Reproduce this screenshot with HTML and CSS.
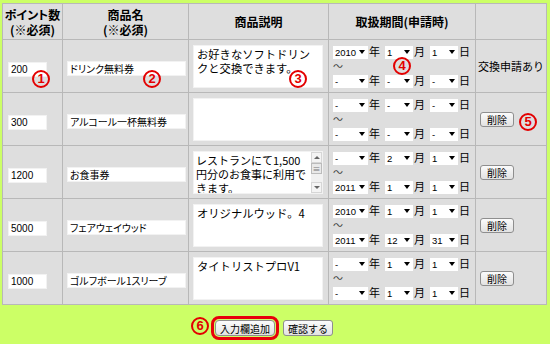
FILE: index.html
```html
<!DOCTYPE html>
<html lang="ja">
<head>
  <meta charset="UTF-8" />
  <title>交換商品設定</title>
  <link rel="stylesheet" href="styles.css">
</head>
<body>
  <div class="sheet">
    <table class="grid">
      <colgroup>
        <col class="col-pt"><col class="col-name"><col class="col-desc"><col class="col-date"><col class="col-act">
      </colgroup>
      <thead>
        <tr>
          <th>ポイント数<br>(※必須)</th>
          <th>商品名<br>(※必須)</th>
          <th>商品説明</th>
          <th>取扱期間(申請時)</th>
          <th></th>
        </tr>
      </thead>
      <tbody>
        <tr>
          <td><input class="pt" value="200"></td>
          <td><input class="name" value="ドリンク無料券"></td>
          <td><div class="descbox"><textarea class="desc">お好きなソフトドリンクと交換できます。</textarea></div></td>
          <td class="date">
            <div class="dline"><span class="sel y"><select><option>2010</option></select></span>年<span class="sel"><select><option>1</option></select></span>月<span class="sel"><select><option>1</option></select></span>日</div>
            <div class="tilde">〜</div>
            <div class="dline"><span class="sel y"><select><option>-</option></select></span>年<span class="sel"><select><option>-</option></select></span>月<span class="sel"><select><option>-</option></select></span>日</div>
          </td>
          <td class="act">交換申請あり</td>
        </tr>
        <tr>
          <td><input class="pt" value="300"></td>
          <td><input class="name" value="アルコール一杯無料券"></td>
          <td><div class="descbox"><textarea class="desc"></textarea></div></td>
          <td class="date">
            <div class="dline"><span class="sel y"><select><option>-</option></select></span>年<span class="sel"><select><option>-</option></select></span>月<span class="sel"><select><option>-</option></select></span>日</div>
            <div class="tilde">〜</div>
            <div class="dline"><span class="sel y"><select><option>-</option></select></span>年<span class="sel"><select><option>-</option></select></span>月<span class="sel"><select><option>-</option></select></span>日</div>
          </td>
          <td class="act"><button class="btn">削除</button></td>
        </tr>
        <tr>
          <td><input class="pt" value="1200"></td>
          <td><input class="name" value="お食事券"></td>
          <td>
            <div class="descbox">
              <textarea class="desc scroll">レストランにて1,500
円分のお食事に利用できます。</textarea>
              <span class="vscroll"><i class="arr up"></i><i class="thumb">≡</i><i class="track"></i><i class="arr down"></i></span>
            </div>
          </td>
          <td class="date">
            <div class="dline"><span class="sel y"><select><option>-</option></select></span>年<span class="sel"><select><option>2</option></select></span>月<span class="sel"><select><option>1</option></select></span>日</div>
            <div class="tilde">〜</div>
            <div class="dline"><span class="sel y"><select><option>2011</option></select></span>年<span class="sel"><select><option>1</option></select></span>月<span class="sel"><select><option>1</option></select></span>日</div>
          </td>
          <td class="act"><button class="btn">削除</button></td>
        </tr>
        <tr>
          <td><input class="pt" value="5000"></td>
          <td><input class="name" value="フェアウェイウッド"></td>
          <td><div class="descbox"><textarea class="desc">オリジナルウッド。4</textarea></div></td>
          <td class="date">
            <div class="dline"><span class="sel y"><select><option>2010</option></select></span>年<span class="sel"><select><option>1</option></select></span>月<span class="sel"><select><option>1</option></select></span>日</div>
            <div class="tilde">〜</div>
            <div class="dline"><span class="sel y"><select><option>2011</option></select></span>年<span class="sel"><select><option>12</option></select></span>月<span class="sel"><select><option>31</option></select></span>日</div>
          </td>
          <td class="act"><button class="btn">削除</button></td>
        </tr>
        <tr>
          <td><input class="pt" value="1000"></td>
          <td><input class="name" value="ゴルフボール1スリーブ"></td>
          <td><div class="descbox"><textarea class="desc">タイトリストプロV1</textarea></div></td>
          <td class="date">
            <div class="dline"><span class="sel y"><select><option>-</option></select></span>年<span class="sel"><select><option>1</option></select></span>月<span class="sel"><select><option>1</option></select></span>日</div>
            <div class="tilde">〜</div>
            <div class="dline"><span class="sel y"><select><option>-</option></select></span>年<span class="sel"><select><option>1</option></select></span>月<span class="sel"><select><option>1</option></select></span>日</div>
          </td>
          <td class="act"><button class="btn">削除</button></td>
        </tr>
      </tbody>
    </table>
    <div class="actions">
      <button class="btn big marked">入力欄追加</button>
      <button class="btn big">確認する</button>
    </div>

    <!-- annotation marks -->
    <span class="mark m1">1</span>
    <span class="mark m2">2</span>
    <span class="mark m3">3</span>
    <span class="mark m4">4</span>
    <span class="mark m5">5</span>
    <span class="mark m6">6</span>
  </div>
</body>
</html>
```

FILE: styles.css
```css
* { box-sizing: border-box; }
body {
  margin: 0;
  background: #ccff66;
  font-family: "Noto Sans CJK JP", sans-serif;
  color: #000;
}
.sheet {
  position: relative;
  width: 550px; height: 344px;
  padding: 3px 4px 0 2px;
  background: #ccff66;
}
.grid {
  width: 544px;
  border-collapse: collapse;
  table-layout: fixed;
  background: #dedede;
}
.col-pt { width: 60px; }
.col-name { width: 126px; }
.col-desc { width: 140px; }
.col-date { width: 147px; }
.col-act { width: 71px; }
.grid th, .grid td {
  border: 1px solid #b8b8b8;
  padding: 0 4px;
}
.grid th {
  height: 36px;
  padding: 0;
  font-size: 12px;
  line-height: 15px;
  font-weight: bold;
  text-align: center;
  white-space: nowrap;
  font-feature-settings: "palt";
}
.grid td { height: 53px; }

input, textarea, select {
  font-family: inherit;
  color: #000;
  background: #fff;
  border: 1px solid #f2f2f2;
  outline: none;
  margin: 0;
}
.pt {
  width: 39px; height: 15px;
  padding: 0 2px;
  font-size: 10px;
  font-family: "Liberation Sans", sans-serif;
  margin-left: 1px;
}
.name {
  width: 119px; height: 15px;
  padding: 0 2px;
  font-size: 10px;
  font-feature-settings: "palt";
}
.descbox {
  position: relative;
  width: 130px; height: 43px;
}
.desc {
  display: block;
  width: 130px; height: 43px;
  padding: 1px 1px 1px 3px;
  font-size: 11.3px;
  line-height: 14px;
  resize: none;
  overflow: hidden;
}
.desc.scroll {
  padding: 1px 7px 1px 2px;
  font-size: 11px;
}
.vscroll {
  position: absolute;
  right: 1px; top: 1px; bottom: 1px;
  width: 11px;
  display: flex;
  flex-direction: column;
  background: #f1f1f1;
}
.vscroll i { display: block; font-style: normal; }
.vscroll .arr {
  position: relative;
  height: 11px;
  background: #f4f4f4;
  border: 1px solid #d6d6d6;
}
.vscroll .arr::after {
  content: "";
  position: absolute;
  left: 2px; top: 3px;
  border-left: 3px solid transparent;
  border-right: 3px solid transparent;
}
.vscroll .up::after { border-bottom: 3px solid #666; }
.vscroll .down::after { border-top: 3px solid #666; }
.vscroll .thumb {
  height: 11px;
  border: 1px solid #bbb;
  background: #e9e9e9;
  font-size: 8px;
  line-height: 9px;
  text-align: center;
  color: #777;
}
.vscroll .track { flex: 1; }

.date { font-size: 11px; }
.dline {
  display: flex;
  align-items: center;
  height: 13px;
  line-height: 13px;
}
.tilde {
  height: 16px;
  line-height: 16px;
  font-size: 10px;
  color: #444;
}
.sel {
  position: relative;
  display: inline-block;
  width: 28px; height: 13px;
  margin-left: 5px;
  margin-right: 1px;
}
.sel:first-child { margin-left: 0; }
.sel.y { width: 35px; }
.sel select {
  appearance: none;
  width: 100%; height: 13px;
  padding: 0 2px;
  border: none;
  font-size: 9.5px;
  font-family: "Liberation Sans", sans-serif;
  line-height: 13px;
}
.sel::after {
  content: "";
  position: absolute;
  right: 3px; top: 5px;
  border-left: 3px solid transparent;
  border-right: 3px solid transparent;
  border-top: 4px solid #000;
  pointer-events: none;
}

.act {
  font-size: 11px;
  white-space: nowrap;
  padding: 0 2px !important;
}
.btn {
  height: 15px;
  padding: 0 6px;
  font-family: inherit;
  font-size: 10px;
  line-height: 13px;
  color: #000;
  background: linear-gradient(#fbfbfb, #e2e2e2);
  border: 1px solid #8e8e8e;
  border-radius: 3px;
}
.act .btn { margin-left: 2px; }
.actions {
  display: flex;
  justify-content: center;
  gap: 8px;
  padding-top: 15px;
}
.btn.big {
  height: 16px;
  padding: 0 4px;
  font-size: 10px;
}
.marked {
  outline: 3px solid #e8000b;
  outline-offset: 1px;
  border-radius: 4px;
}

.mark {
  position: absolute;
  width: 18px; height: 18px;
  border: 2px solid #e30000;
  border-radius: 50%;
  color: #e30000;
  font: bold 13px/14px "Liberation Sans", sans-serif;
  text-align: center;
}
.m1 { left: 32px; top: 70px; }
.m2 { left: 143px; top: 70px; }
.m3 { left: 289px; top: 70px; }
.m4 { left: 393px; top: 57px; }
.m5 { left: 519px; top: 113px; }
.m6 { left: 191px; top: 317px; }
```
